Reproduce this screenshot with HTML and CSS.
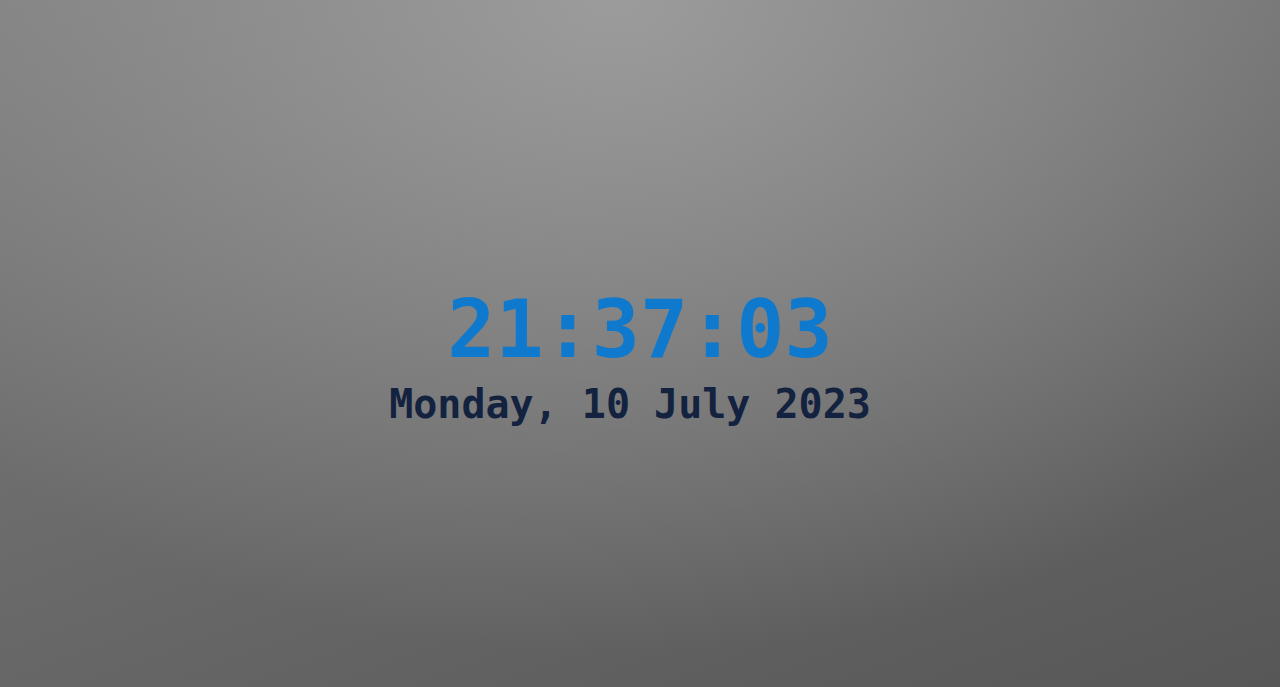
FILE: index.html
```html
<!DOCTYPE html>
<html lang="en">
<head>
<meta charset="utf-8">
<title>Clock</title>
<link rel="stylesheet" href="styles.css">
</head>
<body>
<main class="clock">
  <div class="time">21:37:03</div>
  <div class="date">Monday, 10 July 2023</div>
</main>
</body>
</html>
```

FILE: styles.css
```css
html, body {
  margin: 0;
  height: 100%;
}
body {
  background:
    radial-gradient(ellipse 70% 95% at 48% 0%, rgba(160,160,160,0.9) 0%, rgba(160,160,160,0) 100%),
    linear-gradient(160deg, #7c7c7c 0%, #6a6a6a 50%, #575757 100%);
  font-family: "DejaVu Sans Mono", "Liberation Mono", monospace;
  font-weight: bold;
}
.clock {
  height: 100%;
  display: flex;
  flex-direction: column;
  align-items: center;
  justify-content: center;
  padding-top: 30px;
  box-sizing: border-box;
}
.time {
  font-size: 80px;
  line-height: 80px;
  color: #0f7acd;
}
.date {
  font-size: 40px;
  line-height: 48px;
  margin-top: 10px;
  padding-right: 20px;
  color: #13223f;
}
```
